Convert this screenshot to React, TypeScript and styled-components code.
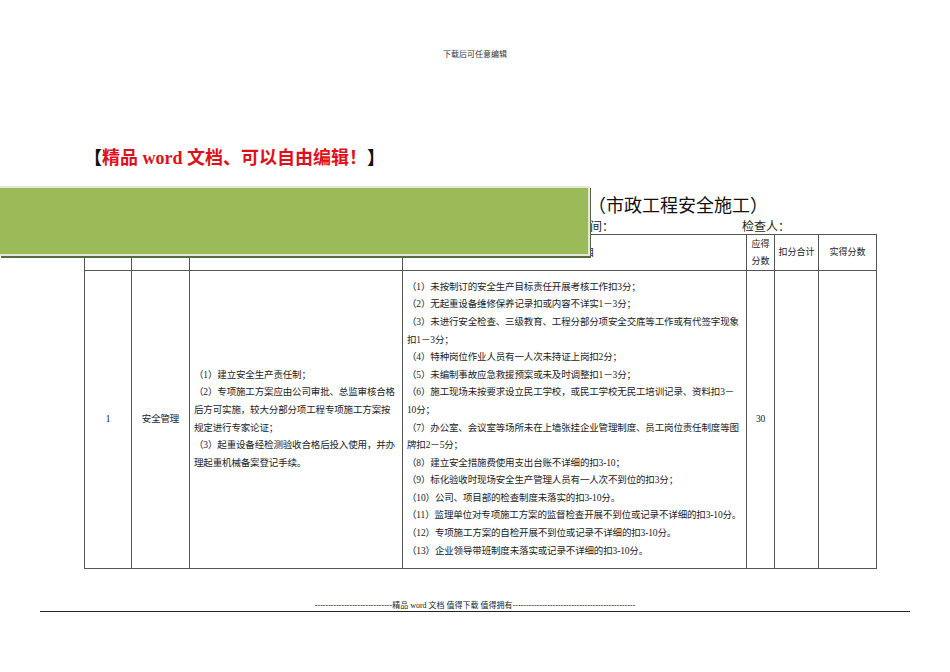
import React from 'react';
import styled, { createGlobalStyle } from 'styled-components';

const Global = createGlobalStyle`
  body { margin: 0; background: #fff; font-family: "Liberation Serif", "Noto Sans CJK SC", serif; color: #222; }
`;

const Page = styled.div`
  position: relative;
  width: 950px;
  height: 672px;
  display: flex;
  flex-direction: column;
`;

const TopNote = styled.div`
  text-align: center;
  font-size: 8px;
  color: #333;
  margin-top: 48px;
`;

const Promo = styled.div`
  margin: 84px 0 0 84px;
  font-size: 18px;
  font-weight: bold;
  color: #e0101a;
  span { color: #111; }
`;

const TitleRow = styled.div`
  margin: 22px 0 0 588px;
  font-size: 18px;
  color: #111;
  height: 24px;
`;

const MetaRow = styled.div`
  display: flex;
  margin: 2px 0 0 590px;
  font-size: 12px;
  height: 17px;
  span:last-child { margin-left: 128px; }
`;

const Overlay = styled.div`
  position: absolute;
  left: 0;
  top: 186px;
  width: 588px;
  height: 66px;
  background: #9bbb59;
  border: 2px solid #e4e8dc;
  border-left: none;
  box-shadow: 1px 2px 0 #5a6a40;
`;

const Table = styled.table`
  margin: 0 0 0 84px;
  width: 792px;
  border-collapse: collapse;
  table-layout: fixed;
  font-size: 9.5px;
  td, th {
    border: 1px solid #555;
    font-weight: normal;
    vertical-align: middle;
    padding: 0 4px;
  }
`;

const Head = styled.th<{ $tight?: boolean }>`
  text-align: center;
  height: 35px;
  font-size: ${(p) => (p.$tight ? '9px' : '10px')};
  line-height: 17px;
  && { padding: ${(p) => (p.$tight ? '0' : '0 4px')}; }
`;

const Cell = styled.td<{ $left?: boolean }>`
  text-align: ${(p) => (p.$left ? 'left' : 'center')};
  line-height: 17.6px;
  height: 297px;
  letter-spacing: -0.15px;
`;

const Footer = styled.div`
  margin: 30px 40px 0 40px;
  border-bottom: 1px solid #222;
  text-align: center;
  font-size: 8px;
  padding-bottom: 1px;
`;

const guarantees = [
  '（1）建立安全生产责任制；',
  '（2）专项施工方案应由公司审批、总监审核合格后方可实施，较大分部分项工程专项施工方案按规定进行专家论证；',
  '（3）起重设备经检测验收合格后投入使用，并办理起重机械备案登记手续。',
];

const general = [
  '（1）未按制订的安全生产目标责任开展考核工作扣3分；',
  '（2）无起重设备维修保养记录扣或内容不详实1－3分；',
  '（3）未进行安全检查、三级教育、工程分部分项安全交底等工作或有代签字现象扣1－3分；',
  '（4）特种岗位作业人员有一人次未持证上岗扣2分；',
  '（5）未编制事故应急救援预案或未及时调整扣1－3分；',
  '（6）施工现场未按要求设立民工学校，或民工学校无民工培训记录、资料扣3－10分；',
  '（7）办公室、会议室等场所未在上墙张挂企业管理制度、员工岗位责任制度等图牌扣2－5分；',
  '（8）建立安全措施费使用支出台账不详细的扣3-10；',
  '（9）标化验收时现场安全生产管理人员有一人次不到位的扣3分；',
  '（10）公司、项目部的检查制度未落实的扣3-10分。',
  '（11）监理单位对专项施工方案的监督检查开展不到位或记录不详细的扣3-10分。',
  '（12）专项施工方案的自检开展不到位或记录不详细的扣3-10分。',
  '（13）企业领导带班制度未落实或记录不详细的扣3-10分。',
];

export default function App() {
  return (
    <Page>
      <Global />
      <TopNote>下载后可任意编辑</TopNote>
      <Promo>
        <span>【</span>精品 word 文档、可以自由编辑！<span>】</span>
      </Promo>
      <TitleRow>（市政工程安全施工）</TitleRow>
      <MetaRow>
        <span>间：</span>
        <span>检查人：</span>
      </MetaRow>
      <Table>
        <colgroup>
          <col style={{ width: 47 }} />
          <col style={{ width: 58 }} />
          <col style={{ width: 213 }} />
          <col style={{ width: 344 }} />
          <col style={{ width: 28 }} />
          <col style={{ width: 44 }} />
          <col style={{ width: 58 }} />
        </colgroup>
        <thead>
          <tr>
            <Head>序号</Head>
            <Head>检查项目</Head>
            <Head>保证项目</Head>
            <Head>一般项目</Head>
            <Head $tight>应得<br />分数</Head>
            <Head $tight>扣分合计</Head>
            <Head $tight>实得分数</Head>
          </tr>
        </thead>
        <tbody>
          <tr>
            <Cell>1</Cell>
            <Cell>安全管理</Cell>
            <Cell $left>{guarantees.map((g) => <div key={g}>{g}</div>)}</Cell>
            <Cell $left>{general.map((g) => <div key={g}>{g}</div>)}</Cell>
            <Cell>30</Cell>
            <Cell />
            <Cell />
          </tr>
        </tbody>
      </Table>
      <Footer>-----------------------------精品 word 文档 值得下载 值得拥有----------------------------------------------</Footer>
      <Overlay />
    </Page>
  );
}
